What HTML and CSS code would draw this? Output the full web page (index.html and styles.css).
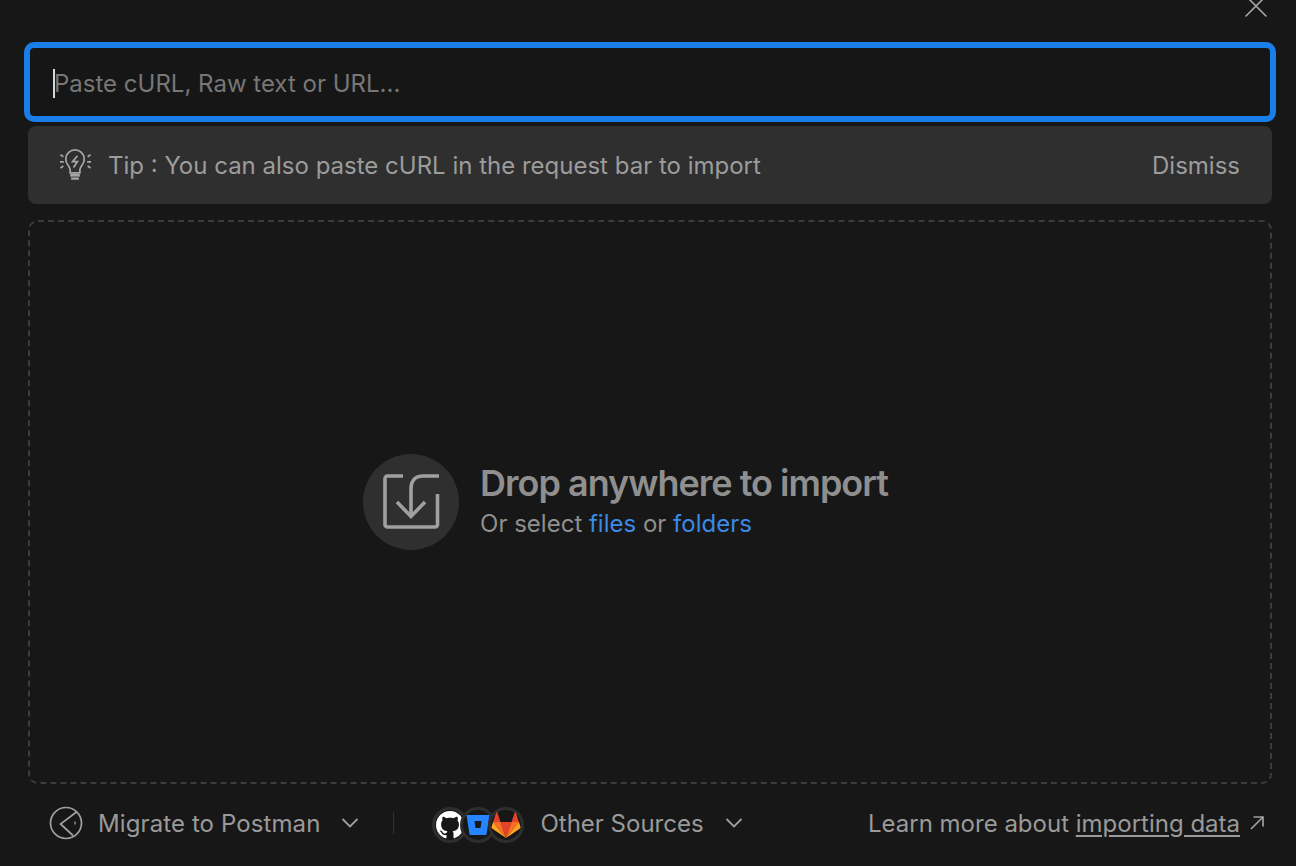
FILE: index.html
```html
<!DOCTYPE html>
<html lang="en">
<head>
  <meta charset="UTF-8" />
  <meta name="viewport" content="width=device-width, initial-scale=1.0">
  <title>Import</title>
  <link rel="stylesheet" href="styles.css">
</head>
<body>
  <!-- Close button -->
  <header class="top-bar">
    <svg class="close-icon" width="24" height="24" viewBox="0 0 24 24" fill="none" stroke="#a6a6a6" stroke-width="1.6">
      <path d="M1.5 1.5 22.5 22.5M22.5 1.5 1.5 22.5" />
    </svg>
  </header>

  <!-- Paste field -->
  <div class="paste-box">
    <span class="caret"></span>
    <span class="paste-text">Paste cURL, Raw text or URL...</span>
  </div>

  <!-- Tip -->
  <div class="tip">
    <svg class="tip-icon" width="34" height="34" viewBox="0 0 34 34" fill="none" stroke="#a6a6a6" stroke-width="1.8">
      <path d="M11.500 25v-3c0-1.800-1.200-3.500-2.300-5a9.500 9.500 0 1 1 14.600 0c-1.100 1.500-2.300 3.200-2.300 5v3z" />
      <path d="M19 7.500 14 13.500h5l-4 6" />
      <path d="M11.500 27.500h10" stroke-width="3" />
      <path d="M12.500 31h8" stroke-width="2.400" />
      <path d="M1.500 6.500l3 2M1 13.700h4M1.500 20l3-2M32.500 6.500l-3 2M33 13.700h-4M32.500 20l-3-2" />
    </svg>
    <span class="tip-text">Tip : You can also paste cURL in the request bar to import</span>
    <span class="tip-dismiss">Dismiss</span>
  </div>

  <!-- Drop area -->
  <main class="drop-zone">
    <div class="drop-icon">
      <svg width="58" height="58" viewBox="0 0 58 58" fill="none" stroke="#a0a0a0" stroke-width="3.600">
        <path d="M21 3H5.500A2.500 2.500 0 0 0 3 5.500v46A2.500 2.500 0 0 0 5.500 54h47.500a2.500 2.500 0 0 0 2.500-2.500V21" />
        <path d="M57 3H41C33 3 29 8 29 16v27" />
        <path d="M15 29 29 43.500 43 29" />
      </svg>
    </div>
    <div class="drop-copy">
      <h1 class="drop-title">Drop anywhere to import</h1>
      <p class="drop-sub">Or select <a href="#files">files</a> or <a href="#folders">folders</a></p>
    </div>
  </main>

  <!-- Footer -->
  <footer class="bottom-bar">
    <div class="migrate">
      <svg class="migrate-icon" width="34" height="34" viewBox="0 0 34 34" fill="none" stroke="#a0a0a0" stroke-width="1.700">
        <circle cx="17" cy="17" r="15.500" />
        <path d="M27.500 6 11.500 18 24 29.500" />
        <path d="M26 15.500v3" stroke-width="1.300" />
      </svg>
      <span class="footer-label">Migrate to Postman</span>
      <svg class="chevron" width="18" height="10" viewBox="0 0 18 10" fill="none" stroke="#a0a0a0" stroke-width="1.800"><path d="M1.500 1 9 8.500 16.500 1" /></svg>
    </div>
    <span class="divider"></span>
    <div class="sources">
      <div class="logos">
        <span class="logo">
          <svg width="28" height="28" viewBox="0 0 16 16" fill="#fff"><path d="M8 0C3.580 0 0 3.580 0 8c0 3.540 2.290 6.530 5.470 7.590.4.070.55-.17.55-.38 0-.19-.01-.82-.01-1.490-2.010.37-2.530-.49-2.690-.94-.09-.23-.48-.94-.82-1.130-.28-.15-.68-.52-.01-.53.63-.01 1.080.58 1.230.82.720 1.210 1.870.87 2.330.66.070-.52.28-.87.51-1.070-1.780-.2-3.640-.89-3.640-3.950 0-.87.31-1.590.82-2.150-.08-.2-.36-1.020.08-2.120 0 0 .67-.21 2.200.82.640-.18 1.320-.27 2-.27.680 0 1.360.09 2 .27 1.530-1.040 2.200-.82 2.200-.82.440 1.100.16 1.920.08 2.120.51.560.82 1.270.82 2.150 0 3.070-1.870 3.750-3.650 3.950.29.25.54.73.54 1.480 0 1.070-.01 1.930-.01 2.200 0 .21.15.46.55.38A8.013 8.013 0 0 0 16 8c0-4.420-3.580-8-8-8z" /></svg>
        </span>
        <span class="logo">
          <svg width="24" height="24" viewBox="0 0 24 24"><path fill="#2684ff" d="M.5 2h23l-3 19.500a1 1 0 0 1-1 .5h-15a1 1 0 0 1-1-.5z" /><path fill="#171717" d="M8.500 8h7l-1 7h-5z" /></svg>
        </span>
        <span class="logo">
          <svg width="30" height="28" viewBox="0 0 30 28">
            <path fill="#e24329" d="M15 27 9.500 11h11z" />
            <path fill="#fc6d26" d="M15 27 9.500 11H2z" />
            <path fill="#fca326" d="M2 11 .500 16c-.2.600 0 1.200.500 1.600L15 27z" />
            <path fill="#e24329" d="M2 11h7.500L6.300 1.500c-.2-.5-.8-.5-1 0z" />
            <path fill="#fc6d26" d="M15 27l5.500-16H28z" />
            <path fill="#fca326" d="M28 11l1.500 5c.2.600 0 1.200-.5 1.600L15 27z" />
            <path fill="#e24329" d="M28 11h-7.500l3.200-9.500c.2-.5.8-.5 1 0z" />
          </svg>
        </span>
      </div>
      <span class="footer-label">Other Sources</span>
      <svg class="chevron" width="18" height="10" viewBox="0 0 18 10" fill="none" stroke="#a0a0a0" stroke-width="1.800"><path d="M1.500 1 9 8.500 16.500 1" /></svg>
    </div>
    <div class="learn-more">
      <span class="footer-label">Learn more about <a href="#docs">importing data</a></span>
      <svg width="14" height="14" viewBox="0 0 14 14" fill="none" stroke="#a0a0a0" stroke-width="1.700"><path d="M1 13 13 1M3.500 1H13v9.500" /></svg>
    </div>
  </footer>
</body>
</html>
```

FILE: styles.css
```css
html, body {
  height: 100%;
}
body {
  margin: 0;
  height: 866px;
  padding: 0 24px 0 28px;
  box-sizing: border-box;
  background: #171717;
  color: #a6a6a6;
  font-family: 'Inter', sans-serif;
  font-size: 24px;
  overflow: hidden;
  display: flex;
  flex-direction: column;
}
a {
  color: inherit;
}

/* top */
.top-bar {
  height: 42px;
  flex: none;
  display: flex;
  justify-content: flex-end;
}
.close-icon {
  margin: -6px 4px 0 0;
}

/* paste field */
.paste-box {
  height: 80px;
  flex: none;
  box-sizing: border-box;
  margin: 0 -4px;
  border: 6px solid #1a7ee8;
  border-radius: 10px;
  background: #161616;
  display: flex;
  align-items: center;
  padding: 2px 0 0 23px;
  color: #777;
}
.caret {
  width: 2px;
  height: 29px;
  background: #d8d8d8;
  margin-right: -1px;
}

/* tip */
.tip {
  height: 78px;
  flex: none;
  box-sizing: border-box;
  margin-top: 4px;
  background: #2f2f2f;
  border-radius: 8px;
  display: flex;
  align-items: center;
  padding: 0 32px 0 31px;
  color: #9c9c9c;
}
.tip-icon {
  margin-right: 16px;
  flex: none;
  width: 33px;
}
.tip-text {
  flex: 1;
}

/* drop area */
.drop-zone {
  flex: 1;
  margin: 16px 0 0;
  border: 2px dashed #3c3c3c;
  border-radius: 10px;
  display: flex;
  align-items: center;
  justify-content: center;
  gap: 21px;
  padding-right: 49px;
}
.drop-icon {
  width: 96px;
  height: 96px;
  border-radius: 50%;
  background: #2f2f2f;
  display: flex;
  align-items: center;
  justify-content: center;
}
.drop-copy {
  padding-bottom: 4px;
}
.drop-title {
  margin: 0;
  font-size: 36px;
  font-weight: 600;
  letter-spacing: -1px;
  line-height: 44px;
  color: #8f8f8f;
}
.drop-sub {
  margin: 4px 0 0;
  line-height: 30px;
  color: #8f8f8f;
}
.drop-sub a {
  color: #3a8ae6;
  text-decoration: none;
}

/* bottom */
.bottom-bar {
  height: 82px;
  flex: none;
  display: flex;
  align-items: center;
  padding-left: 21px;
  padding-bottom: 4px;
  box-sizing: border-box;
}
.migrate, .sources, .learn-more {
  display: flex;
  align-items: center;
}
.migrate-icon {
  margin-right: 15px;
}
.migrate .footer-label {
  letter-spacing: 0.1px;
}
.footer-label {
  color: #9a9a9a;
}
.chevron {
  margin-left: 21px;
}
.divider {
  width: 1px;
  height: 22px;
  background: #333;
  margin: 0 38px 0 34px;
}
.logos {
  display: flex;
  margin: 4px 16px 0 0;
}
.logo {
  width: 30px;
  height: 30px;
  border: 3px solid #2e2e2e;
  border-radius: 50%;
  background: #171717;
  display: flex;
  align-items: center;
  justify-content: center;
  margin-right: -8px;
}
.logo:last-child {
  margin-right: 0;
}
.learn-more {
  margin-left: auto;
  gap: 10px;
  padding-right: 8px;
}
.learn-more a {
  text-underline-offset: 3px;
}
```
